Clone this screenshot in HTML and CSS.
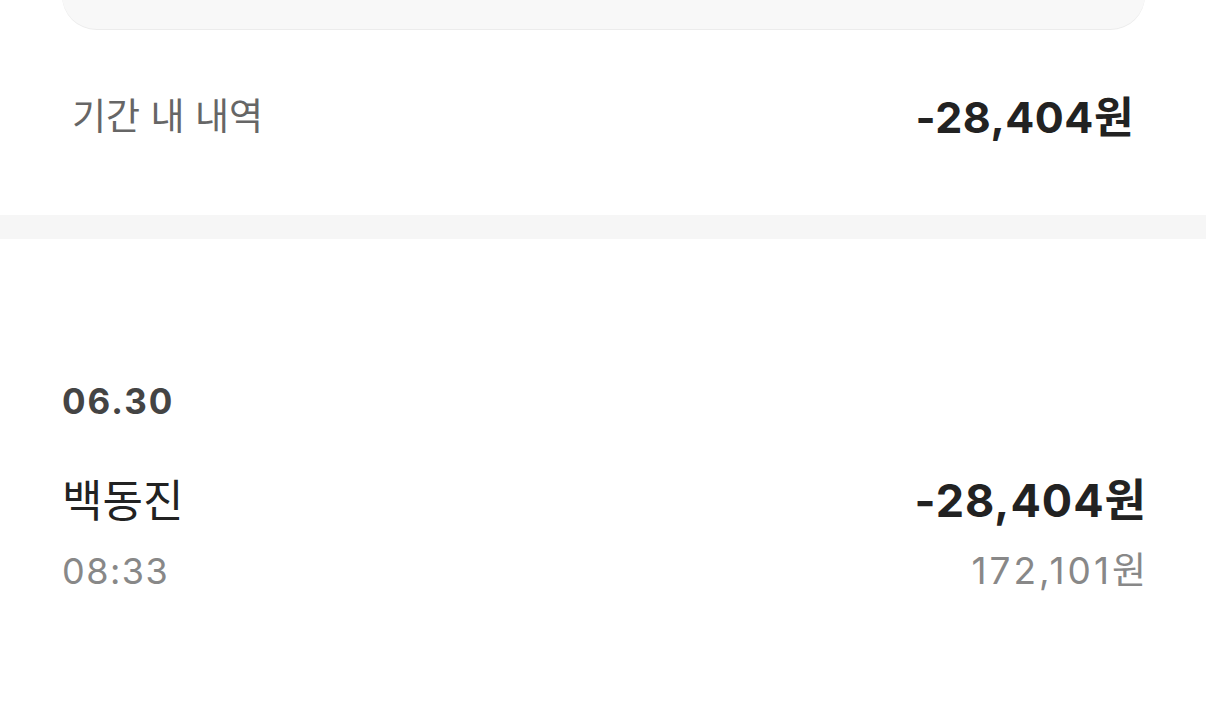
FILE: index.html
```html
<!DOCTYPE html>
<html lang="ko">
<head>
    <meta charset="UTF-8">
    <title>거래 내역</title>
    <link rel="stylesheet" href="styles.css">
</head>
<body>
    <div class="filter-card"></div>

    <div class="summary">
        <span class="summary-label">기간 내 내역</span>
        <span class="summary-amount">-28,404원</span>
    </div>

    <div class="divider"></div>

    <div class="history">
        <p class="date">06.30</p>

        <div class="item">
            <div class="item-left">
                <span class="item-name">백동진</span>
                <span class="item-time">08:33</span>
            </div>
            <div class="item-right">
                <span class="item-amount">-28,404원</span>
                <span class="item-balance">172,101원</span>
            </div>
        </div>
    </div>
</body>
</html>
```

FILE: styles.css
```css
/* 기본 */
body {
    margin: 0;
    background: #fff;
    font-family: Inter, "Noto Sans CJK KR", sans-serif;
    color: #222;
}

/* 상단 필터 카드 (잘린 부분) */
.filter-card {
    margin: -40px 61px 0 62px;
    height: 69px;
    background: #f8f8f8;
    border-radius: 40px;
    box-shadow: 0 1px 0 #ececec;
}

/* 기간 내 내역 합계 */
.summary {
    display: flex;
    justify-content: space-between;
    align-items: center;
    padding: 58px 72px 68px 72px;
}

.summary-label {
    font-size: 37px;
    color: #666;
    line-height: 60px;
}

.summary-amount {
    font-size: 43px;
    font-weight: 700;
    color: #222;
    line-height: 60px;
    letter-spacing: 0.5px;
}

.divider {
    height: 24px;
    background: #f6f6f6;
}

/* 거래 목록 */
.history {
    padding: 0 61px 0 62px;
}

.date {
    margin: 0;
    padding-top: 138px;
    font-size: 35px;
    font-weight: 700;
    color: #444;
    line-height: 48px;
    letter-spacing: 2px;
}

.item {
    display: flex;
    justify-content: space-between;
    margin-top: 52px;
}

.item-left,
.item-right {
    display: flex;
    flex-direction: column;
}

.item-right {
    align-items: flex-end;
}

.item-name {
    font-size: 44px;
    color: #222;
    line-height: 48px;
}

.item-time {
    font-size: 36px;
    color: #888;
    line-height: 48px;
    margin-top: 22px;
    letter-spacing: 1.5px;
}

.item-amount {
    font-size: 45px;
    font-weight: 700;
    color: #222;
    line-height: 48px;
    letter-spacing: 1px;
    margin-right: -2px;
}

.item-balance {
    font-size: 37px;
    color: #888;
    line-height: 48px;
    margin-top: 22px;
    letter-spacing: 3px;
    margin-right: -4px;
}
```
